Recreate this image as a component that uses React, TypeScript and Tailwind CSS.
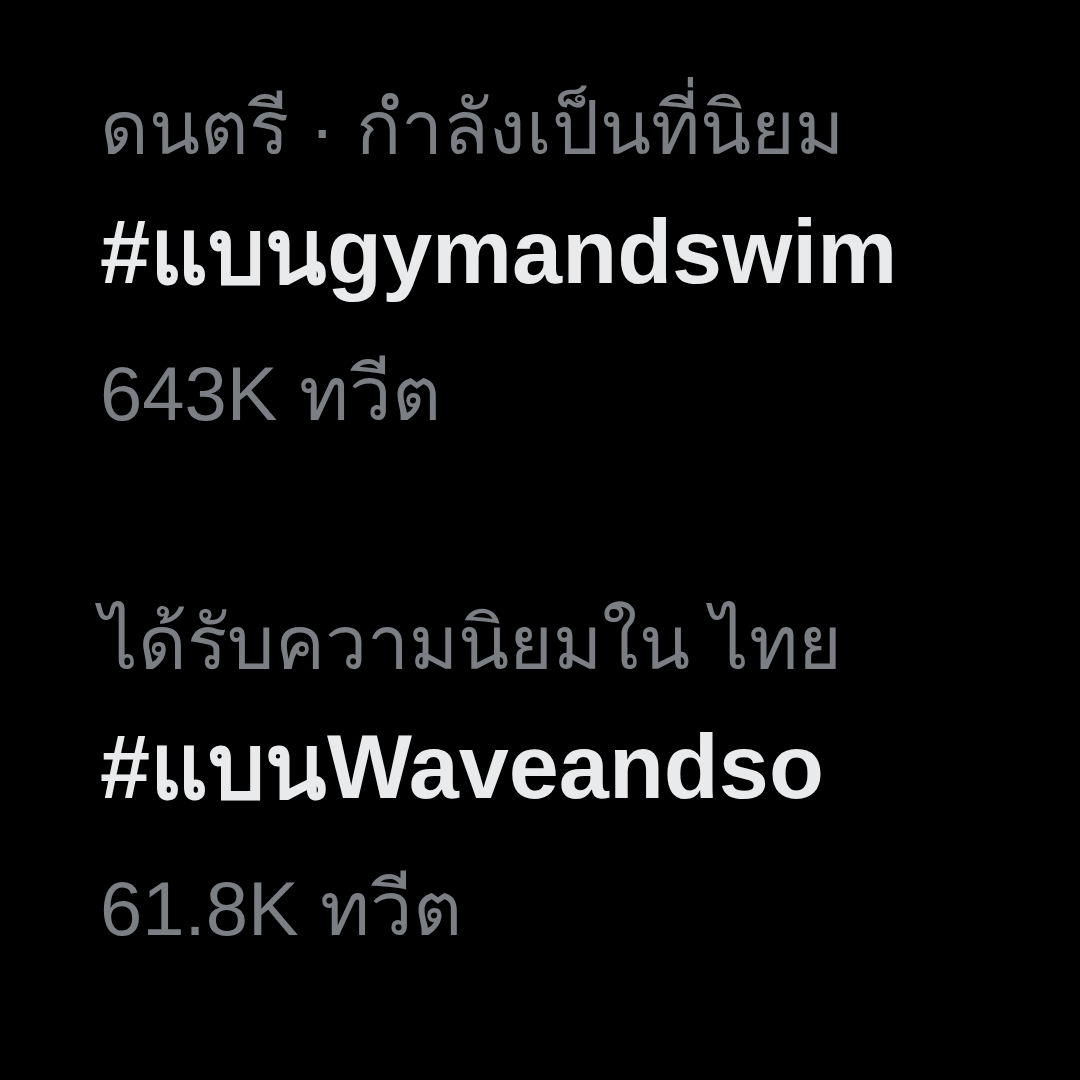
import React from 'react';

const TRENDS = [
  { context: 'ดนตรี · กำลังเป็นที่นิยม', tag: '#แบนgymandswim', count: '643K ทวีต' },
  { context: 'ได้รับความนิยมใน ไทย', tag: '#แบนWaveandso', count: '61.8K ทวีต' },
];

export default function App() {
  return (
    <div className="w-[1080px] h-[1080px] bg-black overflow-hidden pl-[100px] pt-[88px] flex flex-col gap-[116px]" style={{ fontFamily: '"Liberation Sans", "Noto Sans", "DejaVu Sans", sans-serif' }}>
      {TRENDS.map((t) => (
        <div key={t.tag} className="flex flex-col">
          <div className="h-[133px] text-[75px] leading-[80px] text-[#7b7e82] whitespace-nowrap">{t.context}</div>
          <div className="h-[133px] text-[90px] leading-[62px] font-semibold text-[#e9eaeb] whitespace-nowrap">{t.tag}</div>
          <div className="h-[133px] text-[76px] leading-[80px] text-[#7b7e82] whitespace-nowrap">{t.count}</div>
        </div>
      ))}
    </div>
  );
}
